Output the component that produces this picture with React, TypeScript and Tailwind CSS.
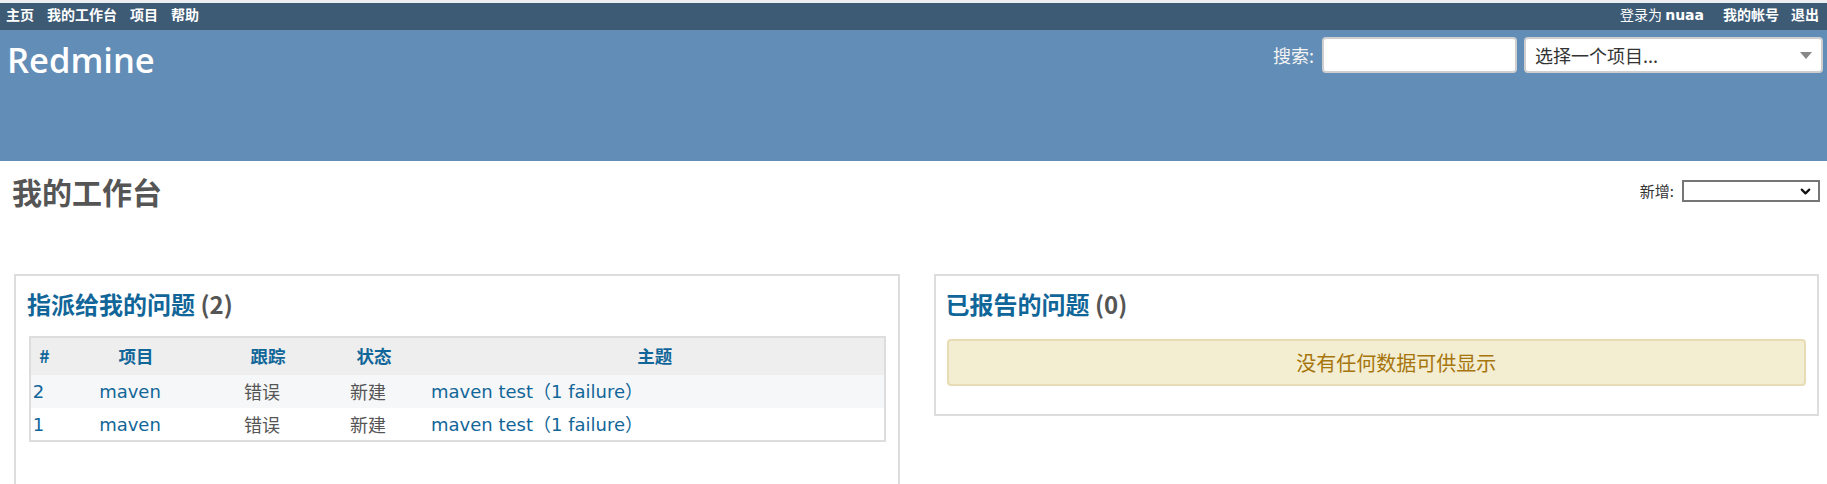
import { ChevronDown } from 'lucide-react';

const cjk = "font-['Noto_Sans_CJK_SC',sans-serif]";
const latin = "font-['DejaVu_Sans','Noto_Sans_CJK_SC',sans-serif]";

const issues = [
  { id: 2, project: 'maven', tracker: '错误', status: '新建', subject: 'maven test（1 failure）' },
  { id: 1, project: 'maven', tracker: '错误', status: '新建', subject: 'maven test（1 failure）' },
];

function TopMenu() {
  return (
    <div className={`h-[27px] bg-[#3e5b76] flex justify-between pl-[6px] pr-[8px] pt-[1px] text-[14px] leading-[20px] text-white ${cjk}`}>
      <div className="flex gap-[13px] font-bold">
        <span>主页</span>
        <span>我的工作台</span>
        <span>项目</span>
        <span>帮助</span>
      </div>
      <div className="flex items-start">
        <span className="mr-[19px]">
          登录为 <span className={`font-bold ${latin}`}>nuaa</span>
        </span>
        <div className="flex gap-[12px] font-bold">
          <span>我的帐号</span>
          <span>退出</span>
        </div>
      </div>
    </div>
  );
}

function Header() {
  return (
    <div className="h-[131px] bg-[#628db6] flex justify-between items-start pl-[7px] pr-[4px] pt-[7px]">
      <h1 className="mt-[5px] text-[34.5px] leading-[36px] font-semibold text-white font-['Open_Sans',sans-serif]">
        Redmine
      </h1>
      <div className={`flex items-center gap-[8px] ${cjk}`}>
        <span className="text-[18px] text-[#f4f4f4]">搜索:</span>
        <div className="w-[195px] h-[36px] bg-white border-2 border-[#cfcfcf] rounded-[4px]" />
        <div className="w-[299px] h-[36px] ml-[-1px] bg-white border-2 border-[#cfcfcf] rounded-[4px] flex items-center justify-between pl-[9px] pr-[9px]">
          <span className="text-[18px] text-[#333]">选择一个项目...</span>
          <svg width="12" height="7" viewBox="0 0 12 7">
            <polygon points="0,0 12,0 6,7" fill="#888" />
          </svg>
        </div>
      </div>
    </div>
  );
}

function AssignedBox() {
  return (
    <div className="border-2 border-[#ddd] pl-[13px] pr-[12px] pt-[12px] pb-[60px]">
      <h3 className={`ml-[-2px] text-[24px] leading-[32px] font-bold text-[#169] ${cjk}`}>
        指派给我的问题 <span className="text-[#555] font-semibold">(2)</span>
      </h3>
      <table className="mt-[16px] w-full table-fixed border-2 border-[#ddd] border-collapse">
        <colgroup>
          <col className="w-[28px]" />
          <col className="w-[156px]" />
          <col className="w-[108px]" />
          <col className="w-[104px]" />
          <col />
        </colgroup>
        <thead>
          <tr className={`h-[38px] bg-[#eee] text-[17.5px] font-bold text-[#169] ${cjk}`}>
            <th className="text-center font-bold">#</th>
            <th className="text-center font-bold">项目</th>
            <th className="text-center font-bold">跟踪</th>
            <th className="text-center font-bold">状态</th>
            <th className="text-center font-bold">主题</th>
          </tr>
        </thead>
        <tbody className={`text-[18px] ${latin}`}>
          {issues.map((issue, i) => (
            <tr key={issue.id} className={i === 0 ? 'h-[33px] bg-[#f6f7f8]' : 'h-[33px] bg-white'}>
              <td className="text-center pr-[12px] text-[#169]">{issue.id}</td>
              <td className="text-center pr-[12px] text-[#169]">{issue.project}</td>
              <td className={`text-center pr-[12px] text-[#555] ${cjk}`}>{issue.tracker}</td>
              <td className={`text-center pr-[12px] text-[#555] ${cjk}`}>{issue.status}</td>
              <td className="text-left pl-[5px] text-[#169] whitespace-nowrap">{issue.subject}</td>
            </tr>
          ))}
        </tbody>
      </table>
    </div>
  );
}

function ReportedBox() {
  return (
    <div className="self-start border-2 border-[#ddd] px-[11px] pt-[12px] pb-[28px]">
      <h3 className={`ml-[-1px] text-[24px] leading-[32px] font-bold text-[#169] ${cjk}`}>
        已报告的问题 <span className="text-[#555] font-semibold">(0)</span>
      </h3>
      <div className={`mt-[19px] h-[47px] pl-[40px] flex items-center justify-center bg-[#f3edd2] border-2 border-[#e8dcb5] rounded-[4px] text-[20px] text-[#a6750c] ${cjk}`}>
        没有任何数据可供显示
      </div>
    </div>
  );
}

export default function App() {
  return (
    <div className="w-[1827px] h-[484px] overflow-hidden bg-white">
      <div className="h-[3px] bg-[#eceef0]" />
      <TopMenu />
      <Header />
      <div className="pl-[12px] pr-[7px] mt-[12px] flex justify-between items-center">
        <h2 className={`text-[30px] leading-[36px] font-bold text-[#555] ${cjk}`}>我的工作台</h2>
        <div className={`flex items-center gap-[8px] text-[15px] text-[#333] ${cjk}`}>
          <span>新增:</span>
          <div className="w-[138px] h-[22px] border-2 border-[#767676] bg-white flex items-center justify-end pr-[5px]">
            <ChevronDown size={15} strokeWidth={3.5} color="#111" />
          </div>
        </div>
      </div>
      <div className="mt-[65px] pl-[14px] pr-[8px] grid grid-cols-2 gap-[34px] items-start">
        <AssignedBox />
        <ReportedBox />
      </div>
    </div>
  );
}
